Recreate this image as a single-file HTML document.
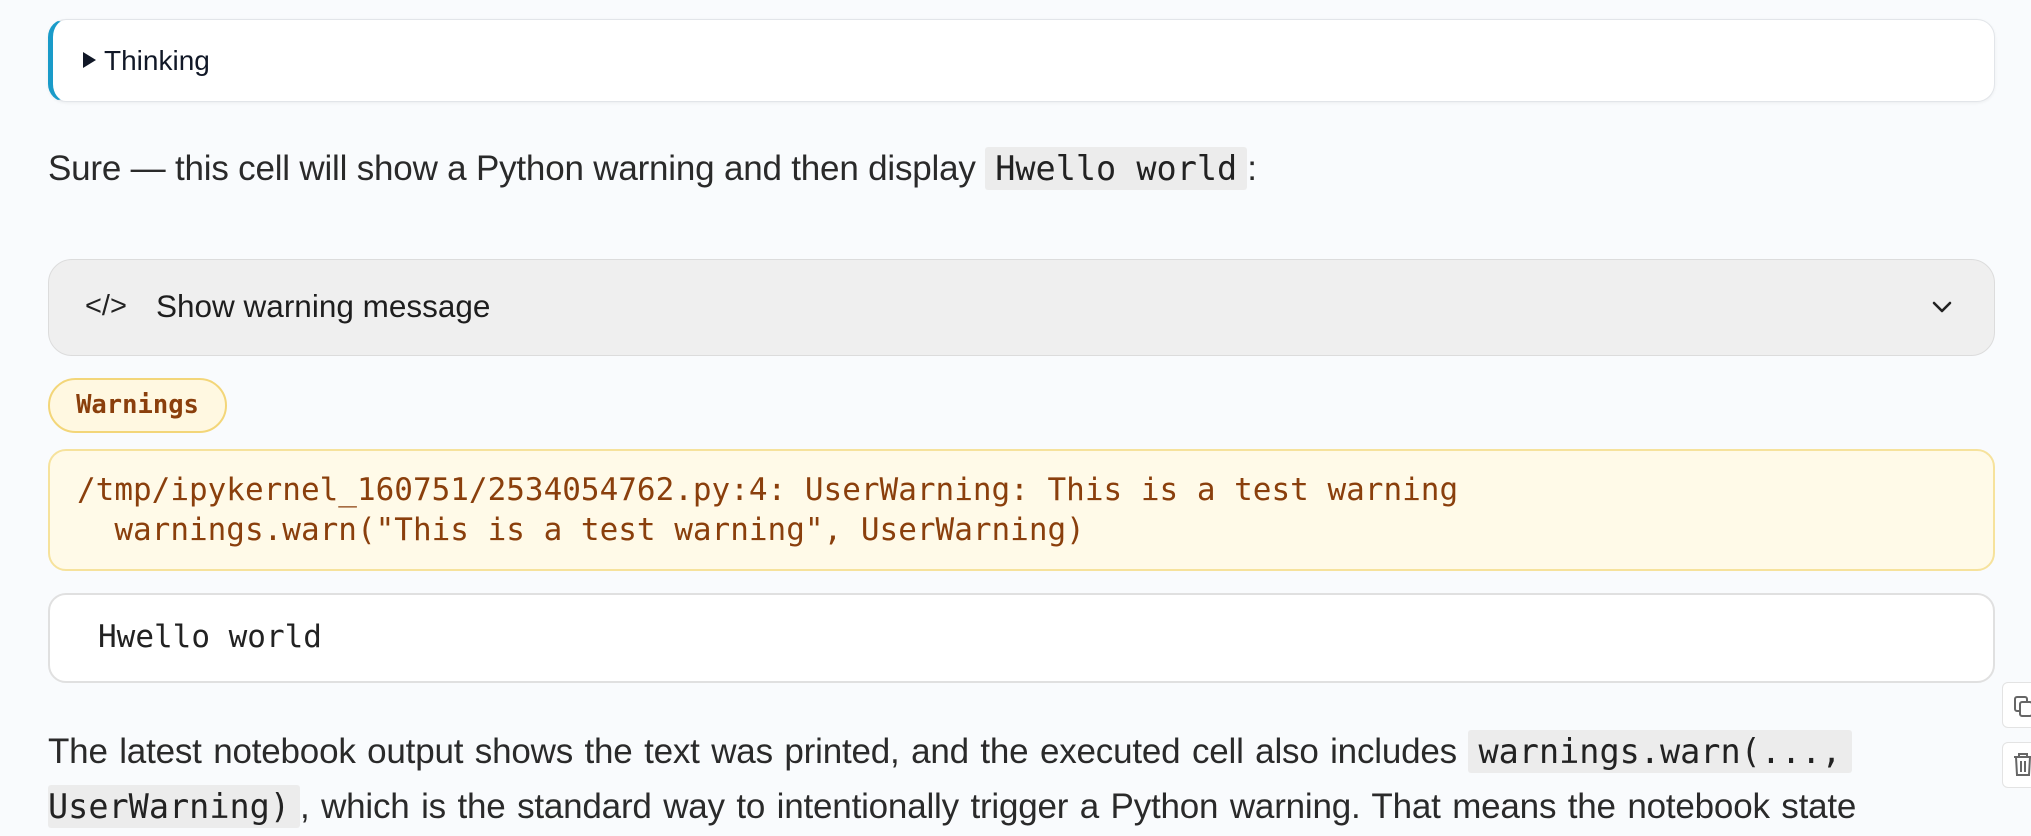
<!DOCTYPE html>
<html><head><meta charset="utf-8"><style>
*{box-sizing:border-box;margin:0;padding:0}
html,body{width:2031px;height:836px;overflow:hidden;background:#f9fbfd;font-family:"Liberation Sans",sans-serif;color:#1f1f1f}
.abs{position:absolute}
.think{left:48px;top:19px;width:1947px;height:83px;background:#fff;border:1.5px solid #e2e5e9;border-left:5px solid #1a9bc9;border-radius:18px;box-shadow:0 1px 3px rgba(0,0,0,.06)}
.think span{position:absolute;left:30px;top:25px;font-size:28px;color:#111827}
.tri{display:inline-block;width:0;height:0;border-left:13px solid #111827;border-top:8px solid transparent;border-bottom:8px solid transparent;margin-right:8px;vertical-align:2px}
.p{font-size:35px;color:#2a2a2a;white-space:nowrap;letter-spacing:-.2px}
code{font-family:"DejaVu Sans Mono","Liberation Mono",monospace;background:#ececec;font-size:33.5px;padding:2px 10px;border-radius:3px;color:#222;letter-spacing:0}
.show{left:48px;top:259px;width:1947px;height:97px;background:#efefef;border:1.5px solid #dcdcdc;border-radius:24px}
.show .ic{position:absolute;left:36px;top:30px;font-size:29px;color:#222}
.show .t{position:absolute;left:107px;top:28px;font-size:31.5px;color:#1e1e1e}
.pill{left:48px;top:378px;width:179px;height:55px;background:#fff8e1;border:2px solid #f3d679;border-radius:28px;font-family:"DejaVu Sans Mono",monospace;font-weight:bold;color:#8a3f0c;font-size:25.5px;text-align:center;line-height:51px}
.warn{left:48px;top:449px;width:1947px;height:122px;background:#fffae8;border:2px solid #f6e29c;border-radius:18px;font-family:"DejaVu Sans Mono",monospace;font-size:31px;color:#8a3f0c;padding:19px 0 0 27px;line-height:40px;white-space:pre}
.out{left:48px;top:593px;width:1947px;height:90px;background:#fff;border:2px solid #e0e0e0;border-radius:18px;font-family:"DejaVu Sans Mono",monospace;font-size:31px;color:#222;padding:24px 0 0 48px}
.btn{left:2002px;width:40px;height:46px;background:#fff;border:1.5px solid #e3e3e3;border-radius:6px}
</style></head><body>
<div class="abs think"><span><i class="tri"></i>Thinking</span></div>
<div class="abs p" style="left:48px;top:149px">Sure — this cell will show a Python warning and then display <code>Hwello world</code>:</div>
<div class="abs show"><span class="ic">&lt;/&gt;</span><span class="t">Show warning message</span>
<svg style="position:absolute;right:40px;top:38px" width="24" height="18" viewBox="0 0 24 18"><path d="M4 5 L12 13 L20 5" fill="none" stroke="#222" stroke-width="2.6" stroke-linecap="round" stroke-linejoin="round"/></svg></div>
<div class="abs pill">Warnings</div>
<div class="abs warn">/tmp/ipykernel_160751/2534054762.py:4: UserWarning: This is a test warning
  warnings.warn("This is a test warning", UserWarning)</div>
<div class="abs out">Hwello world</div>
<div class="abs p" style="left:48px;top:732px;word-spacing:2px">The latest notebook output shows the text was printed, and the executed cell also includes <code>warnings.warn(...,</code></div>
<div class="abs p" style="left:48px;top:787px;word-spacing:2px"><code style="padding-left:0">UserWarning)</code>, which is the standard way to intentionally trigger a Python warning. That means the notebook state</div>
<div class="abs btn" style="top:682px"><svg width="40" height="46" viewBox="0 0 40 46"><rect x="12" y="14" width="12" height="14" rx="2" fill="none" stroke="#666" stroke-width="2"/><rect x="17" y="19" width="12" height="14" rx="2" fill="#fff" stroke="#666" stroke-width="2"/></svg></div>
<div class="abs btn" style="top:742px"><svg width="40" height="46" viewBox="0 0 40 46"><path d="M11 14h18M16 14v-3h8v3M13 14l1 18h12l1-18M18 18v11M22 18v11" fill="none" stroke="#666" stroke-width="2"/></svg></div>
</body></html>
